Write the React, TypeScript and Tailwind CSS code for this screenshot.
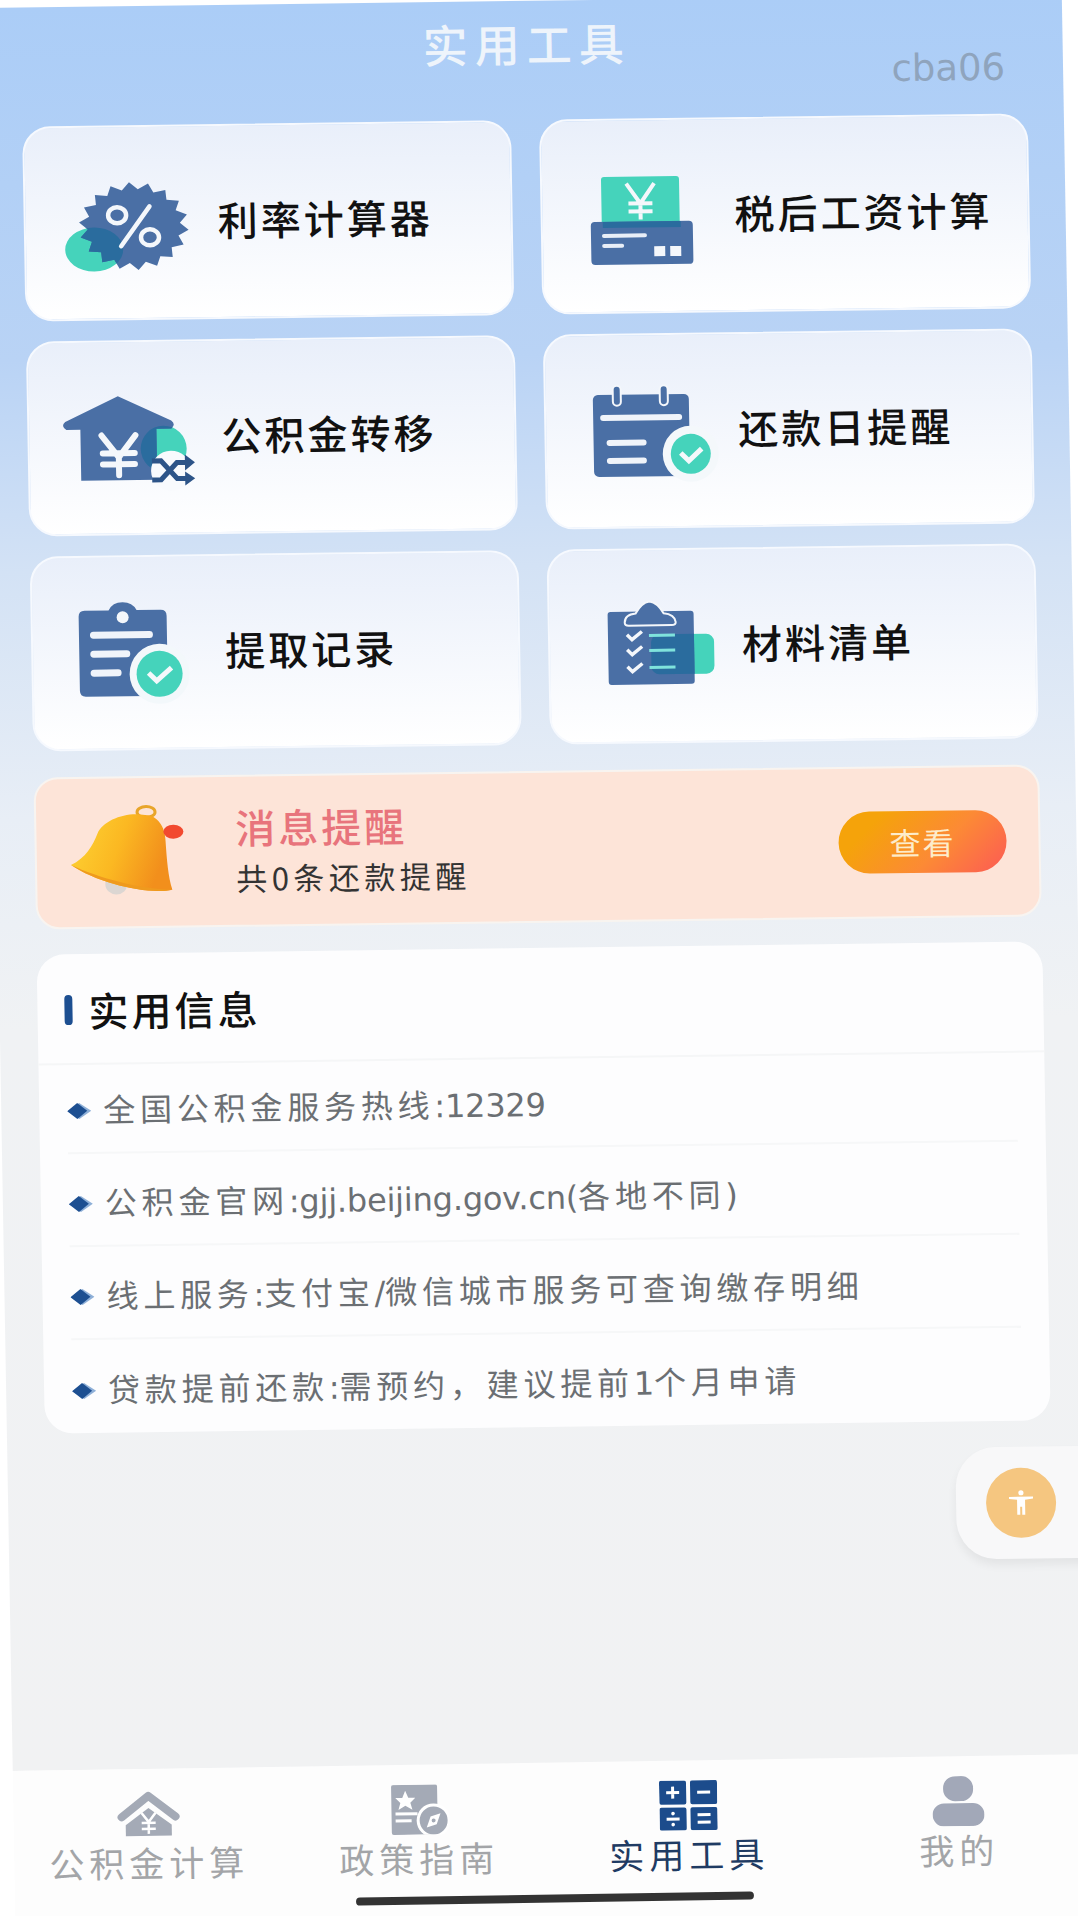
import React from 'react';

const BLUE = '#4a6fa5';
const TEAL = '#45d3bb';
const OVERLAP = '#2a6c9e';

const burstPath = (cx: number, cy: number, rx: number, ry: number, n: number) => {
    const pts: string[] = [];
    for (let i = 0; i < n * 2; i++) {
        const k = i % 2 === 0 ? 1 : 0.84;
        const a = (Math.PI * i) / n + 0.1;
        pts.push(`${(cx + rx * k * Math.cos(a)).toFixed(1)},${(cy + ry * k * Math.sin(a)).toFixed(1)}`);
    }
    return `M${pts.join('L')}Z`;
};

const IconBox: React.FC<{ children: React.ReactNode }> = ({ children }) => (
    <svg viewBox="0 0 136 120" className="w-[136px] h-[120px] shrink-0 overflow-visible">
        {children}
    </svg>
);

const RateIcon = () => {
    const burst = burstPath(74, 63, 55, 44, 18);
    return (
        <IconBox>
            <defs>
                <clipPath id="rate-clip">
                    <ellipse cx="34" cy="86" rx="29" ry="22" />
                </clipPath>
            </defs>
            <ellipse cx="34" cy="86" rx="29" ry="22" fill={TEAL} />
            <path d={burst} fill={BLUE} />
            <path d={burst} fill={OVERLAP} clipPath="url(#rate-clip)" />
            <ellipse cx="57.5" cy="52" rx="9" ry="8" fill="none" stroke="#f4f7fb" strokeWidth="4.5" />
            <ellipse cx="90" cy="74.5" rx="9" ry="8" fill="none" stroke="#f4f7fb" strokeWidth="4.5" />
            <path d="M90 43.5 L61 83" stroke="#f4f7fb" strokeWidth="4.5" strokeLinecap="round" />
        </IconBox>
    );
};

const SalaryIcon = () => (
    <IconBox>
        <g transform="translate(-3,-7)">
            <rect x="28" y="27" width="78" height="50" rx="3" fill={TEAL} />
            <path d="M53 34 L67 54 L81 34 M67 54 V70 M55 54 H79 M55 62 H79" fill="none" stroke="#f4f7fb" strokeWidth="4" />
            <rect x="17" y="72" width="102" height="43" rx="4" fill={BLUE} />
            <rect x="29" y="72" width="78" height="6" fill={OVERLAP} />
            <rect x="28" y="84" width="45" height="4" rx="2" fill="#e8eef7" />
            <rect x="28" y="94" width="22" height="4" rx="2" fill="#e8eef7" />
            <rect x="80" y="97" width="11" height="10" fill="#f4f7fb" />
            <rect x="96" y="97" width="11" height="10" fill="#f4f7fb" />
        </g>
    </IconBox>
);

const TransferIcon = () => (
    <IconBox>
        <defs>
            <clipPath id="house-clip">
                <path d="M55 23 L108 48 Q113 52 108 56 H93 V107 H17 V56 H3 Q-3 52 2 48 Z" />
            </clipPath>
        </defs>
        <g transform="translate(0,-5)">
            <circle cx="100" cy="76" r="23" fill={TEAL} />
            <path d="M55 23 L108 48 Q113 52 108 56 H93 V107 H17 V56 H3 Q-3 52 2 48 Z" fill={BLUE} strokeLinejoin="round" />
            <circle cx="100" cy="76" r="23" fill={OVERLAP} clipPath="url(#house-clip)" />
            <path d="M38 62 L55 84 L72 62 M55 84 V102 M39 80 H71 M39 91 H71" fill="none" stroke="#f4f7fb" strokeWidth="6" strokeLinecap="round" />
            <circle cx="107" cy="98" r="20" fill="#f8fafd" />
            <path d="M88 88 H97 L113 106 H124 M88 107 H97 L113 90 H124" fill="none" stroke="#2d5488" strokeWidth="5" />
            <path d="M121 82 L131 90 L121 98 Z M121 99 L131 106 L121 113 Z" fill="#2d5488" />
        </g>
    </IconBox>
);

const CalendarIcon = () => (
    <IconBox>
        <g transform="translate(-1,-16)">
            <rect x="14" y="39" width="96" height="82" rx="5" fill={BLUE} />
            <rect x="34" y="30" width="8" height="20" rx="4" fill={BLUE} stroke="#f4f7fb" strokeWidth="2" />
            <rect x="81" y="30" width="8" height="20" rx="4" fill={BLUE} stroke="#f4f7fb" strokeWidth="2" />
            <rect x="21" y="59" width="82" height="6" rx="3" fill="#f0f4fa" />
            <rect x="27" y="84" width="40" height="6" rx="3" fill="#f0f4fa" />
            <rect x="27" y="102" width="40" height="6" rx="3" fill="#f0f4fa" />
            <circle cx="111" cy="99" r="28" fill="#f4f8fb" />
            <circle cx="111" cy="99" r="20" fill={TEAL} />
            <path d="M101 98 L109 106 L122 94" fill="none" stroke="#f4f8fb" strokeWidth="5" />
        </g>
    </IconBox>
);

const RecordIcon = () => (
    <IconBox>
        <g transform="translate(-1,-5)">
            <path d="M19 22 H43 Q47 14 57 14 Q67 14 71 22 H95 Q101 22 101 28 V108 H19 Q13 108 13 102 V28 Q13 22 19 22 Z" fill={BLUE} />
            <circle cx="57" cy="29" r="6" fill="#f4f7fb" />
            <rect x="24" y="43" width="63" height="7" rx="3.5" fill="#f0f4fa" />
            <rect x="24" y="62" width="40" height="7" rx="3.5" fill="#f0f4fa" />
            <rect x="24" y="81" width="31" height="7" rx="3.5" fill="#f0f4fa" />
            <circle cx="93" cy="86" r="30" fill="#f3f8fb" />
            <circle cx="93" cy="86" r="23" fill={TEAL} />
            <path d="M82 85 L90 93 L105 80" fill="none" stroke="#f4f8fb" strokeWidth="5" />
        </g>
    </IconBox>
);

const ChecklistIcon = () => (
    <IconBox>
        <defs>
            <clipPath id="list-clip">
                <rect x="24" y="35" width="86" height="73" />
            </clipPath>
        </defs>
        <g transform="translate(0,-10)">
            <rect x="67" y="58" width="63" height="40" rx="8" fill={TEAL} />
            <rect x="24" y="35" width="86" height="73" rx="3" fill={BLUE} />
            <rect x="67" y="58" width="63" height="40" rx="8" fill={OVERLAP} clipPath="url(#list-clip)" />
            <path d="M41 46 Q41 38 52 37 Q58 26 66 25 Q74 26 80 37 Q91 38 92 46 Q92 49 88 49 H45 Q41 49 41 46 Z" fill={BLUE} stroke="#f4f7fb" strokeWidth="2" />
            <path d="M43 58 L48 63 L58 55 M43 73 L48 78 L58 70 M43 90 L48 95 L58 87" fill="none" stroke="#f4f7fb" strokeWidth="3.5" />
            <path d="M65 59 H91 M65 74 H91 M65 91 H91" stroke="#7fe3dc" strokeWidth="3" />
        </g>
    </IconBox>
);

const BellIcon = () => (
    <svg viewBox="0 0 120 94" className="w-[120px] h-[94px] shrink-0">
        <defs>
            <linearGradient id="bell-grad" x1="0" y1="0" x2="1" y2="0.3">
                <stop offset="0" stopColor="#fdd535" />
                <stop offset="0.55" stopColor="#fbb822" />
                <stop offset="1" stopColor="#f28f1c" />
            </linearGradient>
        </defs>
        <ellipse cx="79" cy="7" rx="9" ry="5.5" fill="none" stroke="#e8a52a" strokeWidth="3" />
        <ellipse cx="48" cy="79" rx="11" ry="10" fill="#dcd6d2" />
        <path d="M78 10 C90 10 98 22 98 36 C99 56 100 72 104 85 C80 90 30 78 3 59 C18 52 25 40 30 28 C36 14 60 6 78 10 Z" fill="url(#bell-grad)" />
        <path d="M3 59 C30 72 70 84 104 85 C80 90 30 78 3 59 Z" fill="#ef9a1e" />
        <ellipse cx="106" cy="27" rx="10" ry="7" fill="#f2492f" />
    </svg>
);

const NavHome = () => (
    <svg viewBox="0 0 64 46" className="w-[64px] h-[46px]">
        <path d="M5 26 L32 5 L59 26" fill="none" stroke="#a4aab6" strokeWidth="8" strokeLinecap="round" strokeLinejoin="round" />
        <path d="M9 34 L32 17 L55 34 V45 H9 Z" fill="#a4aab6" />
        <path d="M25 22 L32 31 L39 22 M32 31 V43 M25 32 H39 M25 38 H39" fill="none" stroke="#fff" strokeWidth="2.5" />
    </svg>
);

const NavPolicy = () => (
    <svg viewBox="0 0 62 50" className="w-[62px] h-[50px]">
        <rect x="4" y="0" width="46" height="50" rx="2" fill="#a4aab6" />
        <path d="M18 6 L21 13 L28 13 L23 18 L25 25 L18 21 L11 25 L13 18 L8 13 L15 13 Z" fill="#fff" />
        <path d="M8 29 H30 M8 36 H24" stroke="#fff" strokeWidth="3" />
        <circle cx="46" cy="36" r="17" fill="#fff" />
        <circle cx="46" cy="36" r="14" fill="#a4aab6" />
        <path d="M53 29 L49 40 L39 43 L43 32 Z" fill="#fff" />
        <circle cx="46" cy="36" r="2" fill="#a4aab6" />
    </svg>
);

const NavTools = () => (
    <svg viewBox="0 0 58 50" className="w-[58px] h-[50px]">
        <rect x="0" y="0" width="27" height="24" rx="2" fill="#1c4c8c" />
        <rect x="31" y="0" width="27" height="24" rx="2" fill="#1c4c8c" />
        <rect x="0" y="27" width="27" height="23" rx="2" fill="#1c4c8c" />
        <rect x="31" y="27" width="27" height="23" rx="2" fill="#1c4c8c" />
        <path d="M7 12 H20 M13.5 6 V18 M38 12 H51 M7 38.5 H20 M38 34.5 H51 M38 42 H51" stroke="#fff" strokeWidth="3" />
        <circle cx="13.5" cy="33" r="1.8" fill="#fff" />
        <circle cx="13.5" cy="44" r="1.8" fill="#fff" />
    </svg>
);

const NavMine = () => (
    <svg viewBox="0 0 52 50" className="w-[52px] h-[50px]">
        <rect x="11" y="0" width="30" height="25" rx="12" fill="#a2a8b8" />
        <rect x="0" y="27" width="52" height="23" rx="11.5" fill="#a2a8b8" />
    </svg>
);

const tools = [
    { label: '利率计算器', icon: <RateIcon /> },
    { label: '税后工资计算', icon: <SalaryIcon /> },
    { label: '公积金转移', icon: <TransferIcon /> },
    { label: '还款日提醒', icon: <CalendarIcon /> },
    { label: '提取记录', icon: <RecordIcon /> },
    { label: '材料清单', icon: <ChecklistIcon /> },
];

const infos = [
    '全国公积金服务热线:12329',
    '公积金官网:gjj.beijing.gov.cn(各地不同)',
    '线上服务:支付宝/微信城市服务可查询缴存明细',
    '贷款提前还款:需预约，建议提前1个月申请',
];

const navItems = [
    { label: '公积金计算', icon: <NavHome />, active: false },
    { label: '政策指南', icon: <NavPolicy />, active: false },
    { label: '实用工具', icon: <NavTools />, active: true },
    { label: '我的', icon: <NavMine />, active: false },
];

export default function App() {
    return (
        <div className="w-[1078px] h-[1916px] overflow-hidden bg-white font-['Noto_Sans_CJK_SC','Noto_Sans',sans-serif]">
            <div className="relative w-[1080px] h-[1960px] ml-[-18px] mt-[8px] origin-top-left skew-x-[1deg] skew-y-[-0.75deg] flex flex-col">
                <main className="h-[1763px] shrink-0 pl-[38px] pr-[36px] bg-[linear-gradient(180deg,#abcdf7_0%,#b9d3f5_20%,#d3e2f5_32%,#e8eef6_46%,#f0f2f4_58%,#f1f2f3_100%)]">
                    <header className="h-[119px] grid grid-cols-[1fr_auto_1fr]">
                        <div />
                        <h1 className="pt-[12px] pl-[6px] text-[45px] leading-[60px] font-medium tracking-[7px] text-[#eef4fb]">实用工具</h1>
                        <span className="justify-self-end pt-[50px] pr-[22px] text-[37px] leading-[46px] text-[#8fa4bd] font-['DejaVu_Sans',sans-serif]">cba06</span>
                    </header>

                    <section className="grid grid-cols-2 gap-x-[28px] gap-y-[20px]">
                        {tools.map((tool) => (
                            <div
                                key={tool.label}
                                className="h-[195px] rounded-[28px] border-2 border-[#f6f9fe] bg-gradient-to-b from-[#e9effa] to-[#ffffff] flex items-center pl-[34px]"
                            >
                                {tool.icon}
                                <span className="ml-[22px] mb-[6px] text-[40px] leading-[50px] font-medium tracking-[3px] text-[#111] whitespace-nowrap">{tool.label}</span>
                            </div>
                        ))}
                    </section>

                    <section className="mt-[26px] h-[152px] rounded-[24px] border-2 border-[#f8f4f0] bg-[#fde4d8] flex items-center pl-[31px] pr-[32px]">
                        <BellIcon />
                        <div className="ml-[48px] flex-1">
                            <div className="text-[40px] leading-[46px] font-medium tracking-[3px] text-[#e8747c]">消息提醒</div>
                            <div className="mt-[7px] text-[31px] leading-[42px] tracking-[4.5px] text-[#333]">共0条还款提醒</div>
                        </div>
                        <button className="w-[168px] h-[62px] rounded-full bg-[linear-gradient(135deg,#f5a30a_20%,#fc8a35_60%,#fc5a55_100%)] text-[31px] tracking-[2px] text-[#fdeccb]">查看</button>
                    </section>

                    <section className="mt-[25px] rounded-[28px] bg-[#fdfdfe]">
                        <div className="h-[111px] flex items-center pl-[27px] pt-[2px] border-b-2 border-[#f5f6f7]">
                            <span className="w-[8px] h-[30px] rounded-full bg-[#1d4f91]" />
                            <h2 className="ml-[16px] text-[40px] leading-[50px] font-medium tracking-[3px] text-[#111]">实用信息</h2>
                        </div>
                        <ul className="pt-[5px] px-[28px] flex flex-col gap-[9px]">
                            {infos.map((info, i) => (
                                <li key={info} className={`h-[84px] flex items-center ${i < infos.length - 1 ? 'border-b-2 border-[#f6f7f8]' : ''}`}>
                                    <svg viewBox="0 0 24 16" className="w-[24px] h-[16px] shrink-0">
                                        <path d="M12 0 L24 8 L12 16 L0 8 Z" fill="#8fb0d8" />
                                        <path d="M10 0 L20 8 L10 16 L0 8 Z" fill="#1d4f91" />
                                    </svg>
                                    <span className="ml-[12px] text-[32px] leading-[44px] text-[#6b6f73] whitespace-nowrap font-['DejaVu_Sans','Noto_Sans_CJK_SC',sans-serif]">
                                        {info.split(/([\x00-\x7f]+)/).map((part, j) => (
                                            <span key={j} className={j % 2 === 0 ? 'tracking-[4.8px]' : 'tracking-[-0.2px]'}>{part}</span>
                                        ))}
                                    </span>
                                </li>
                            ))}
                        </ul>
                    </section>
                </main>

                <nav className="flex-1 origin-top-left skew-y-[-0.15deg] bg-[#fdfdfd]">
                    <div className="grid grid-cols-4 pt-[20px]">
                        {navItems.map((item) => (
                            <div key={item.label} className="flex flex-col items-center">
                                <div className="h-[50px] flex items-center justify-center">{item.icon}</div>
                                <span className={`text-[35px] leading-[46px] tracking-[5px] ${item.active ? 'text-[#1f3b63]' : 'text-[#a3a5a8]'}`}>{item.label}</span>
                            </div>
                        ))}
                    </div>
                    <div className="mx-auto mt-[16px] w-[398px] h-[8px] rounded-full bg-[#333]" />
                </nav>

                <div className="absolute left-[948px] top-[1452px] w-[132px] h-[112px] rounded-l-[40px] bg-[#f8f8f9] shadow-[0_6px_10px_rgba(0,0,0,0.06)] flex items-center pl-[30px]">
                    <div className="w-[70px] h-[70px] rounded-full bg-[#f5c680] flex items-center justify-center">
                        <svg viewBox="0 0 26 26" className="w-[26px] h-[26px]">
                            <circle cx="13" cy="3" r="2.6" fill="#fff" />
                            <path d="M1 7 H25 V9 L17 10 V25 H14 V17 H12 V25 H9 V10 L1 9 Z" fill="#fff" />
                        </svg>
                    </div>
                </div>
            </div>
        </div>
    );
}
